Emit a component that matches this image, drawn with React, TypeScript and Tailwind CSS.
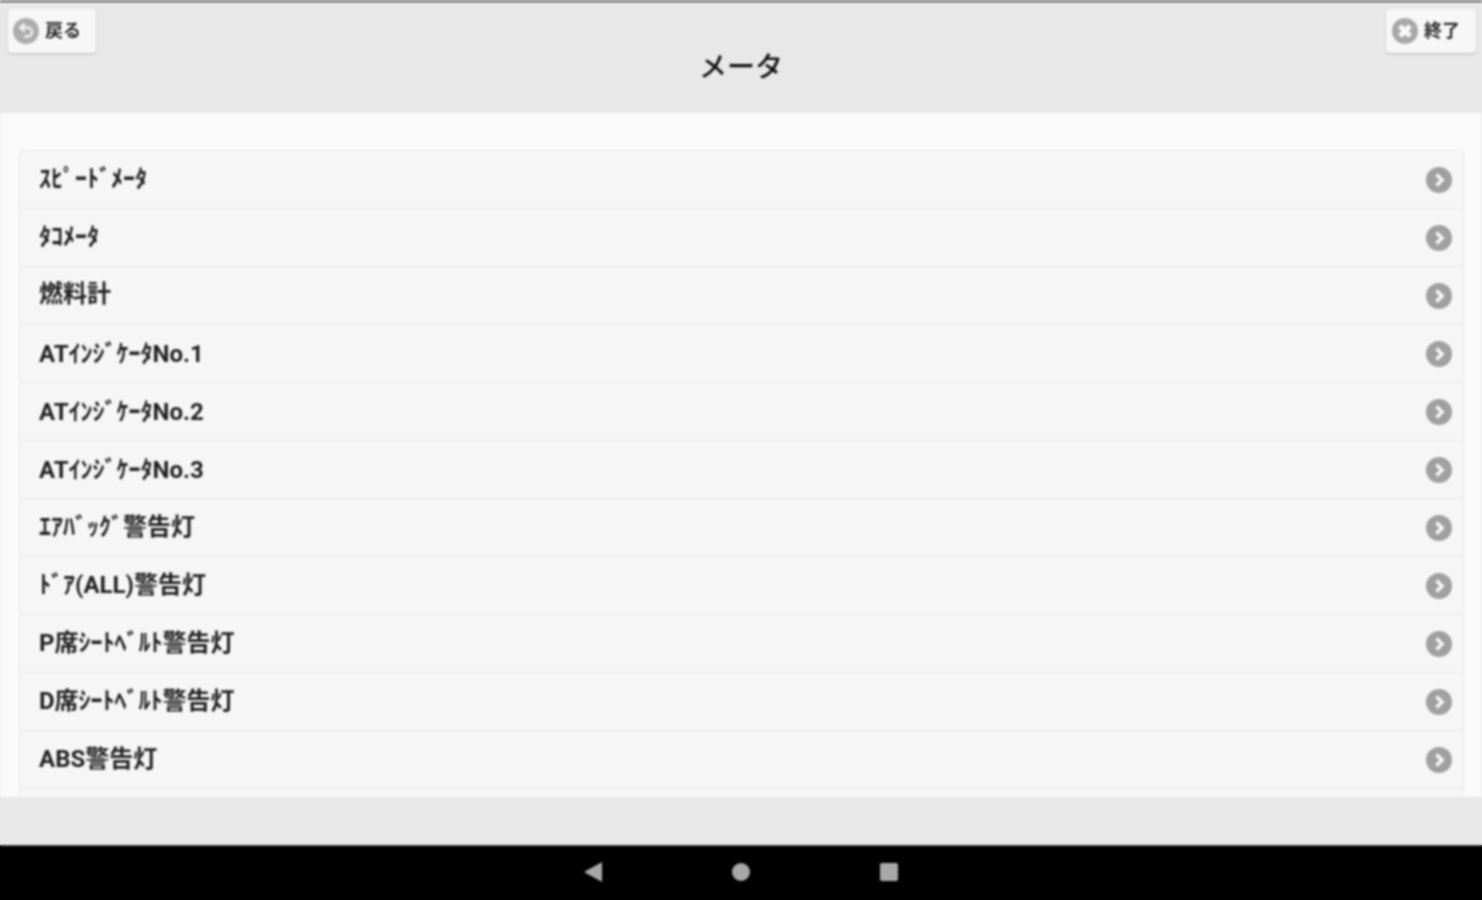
import React from "react";

const rows = [
  { t: "ｽﾋﾟｰﾄﾞﾒｰﾀ", c: "pb-[2px]" },
  { t: "ﾀｺﾒｰﾀ", c: "pb-[2px]" },
  { t: "燃料計", c: "pb-[3px]" },
  { t: "ATｲﾝｼﾞｹｰﾀNo.1", c: "pb-0" },
  { t: "ATｲﾝｼﾞｹｰﾀNo.2", c: "pb-0" },
  { t: "ATｲﾝｼﾞｹｰﾀNo.3", c: "pb-0" },
  { t: "ｴｱﾊﾞｯｸﾞ警告灯", c: "pb-[2px]" },
  { t: "ﾄﾞｱ(ALL)警告灯", c: "pb-[2px]" },
  { t: "P席ｼｰﾄﾍﾞﾙﾄ警告灯", c: "pb-[2px]" },
  { t: "D席ｼｰﾄﾍﾞﾙﾄ警告灯", c: "pb-[2px]" },
  { t: "ABS警告灯", c: "pb-[2px]" },
  { t: "", c: "" },
];

const font = { fontFamily: '"Noto Sans CJK JP", sans-serif' };

function Chevron() {
  return (
    <svg width="26" height="26" viewBox="0 0 26 26" className="shrink-0">
      <circle cx="13" cy="13" r="13" fill="#a0a0a0" />
      <path d="M10.5 7.5 L16 13 L10.5 18.5" fill="none" stroke="#f6f6f6" strokeWidth="3.6" />
    </svg>
  );
}

function BackIcon() {
  return (
    <svg width="26" height="26" viewBox="0 0 26 26" className="shrink-0">
      <circle cx="13" cy="13" r="13" fill="#adadad" />
      <path d="M8.5 9.5 H14.5 A4.5 4.5 0 0 1 14.5 18.5 H11" fill="none" stroke="#f2f2f2" strokeWidth="2.4" />
      <path d="M11.5 5.5 L7.5 9.5 L11.5 13.5" fill="none" stroke="#f2f2f2" strokeWidth="2.4" />
    </svg>
  );
}

function CloseIcon() {
  return (
    <svg width="26" height="26" viewBox="0 0 26 26" className="shrink-0">
      <circle cx="13" cy="13" r="13" fill="#a8a8a8" />
      <path d="M8 8 L18 18 M18 8 L8 18" fill="none" stroke="#fbfbfb" strokeWidth="5" />
    </svg>
  );
}

export default function App() {
  return (
    <div className="w-[1482px] h-[900px] overflow-hidden bg-[linear-gradient(#e8e8e8_845px,#000_845px)]">
      <div className="w-full h-full flex flex-col overflow-hidden bg-[#fafafa] blur-[0.8px] font-['Roboto','Noto_Sans_CJK_JP',sans-serif]">
        <div className="h-[113px] shrink-0 bg-[#e8e8e8] border-t-[3px] border-[#8c8c8c] px-[6px] pt-[5px] flex items-start justify-between relative">
          <div className="absolute left-0 right-0 top-0 h-[2px] bg-[#f4f4f4]" />
          <button className="mt-[1px] ml-[2px] w-[88px] h-[44px] rounded-[4px] bg-[#f7f7f7] shadow-[0_1px_2px_rgba(0,0,0,0.22)] flex items-center gap-[6px] pl-[5px] pb-[3px] text-[#2a2a2a] text-[18px] font-bold">
            <span className="mt-[3px] flex"><BackIcon /></span>
            <span style={font}>戻る</span>
          </button>
          <h1 className="absolute left-0 right-0 top-[44px] text-center text-[28px] leading-[36px] font-medium text-[#111]" style={font}>
            メータ
          </h1>
          <button className="mt-[1px] w-[90px] h-[44px] rounded-[4px] bg-[#f7f7f7] shadow-[0_1px_2px_rgba(0,0,0,0.22)] flex items-center gap-[6px] pl-[6px] pb-[3px] text-[#2a2a2a] text-[18px] font-bold">
            <span className="mt-[3px] flex"><CloseIcon /></span>
            <span style={font}>終了</span>
          </button>
        </div>

        <div className="h-[684px] shrink-0 overflow-hidden px-[19px] pt-[37px]">
          <ul className="w-[1445px] rounded-t-[6px] border border-[#e9e9e9] bg-[#f6f6f6]">
            {rows.map((r, i) => (
              <li
                key={i}
                className="h-[58px] flex items-center justify-between pl-[19px] pr-[11px] border-b border-[#e9e9e9]"
              >
                <span className={`text-[24px] leading-[30px] font-bold text-[#222] ${r.c}`}>{r.t}</span>
                {r.t && <Chevron />}
              </li>
            ))}
          </ul>
        </div>

        <div className="h-[48px] shrink-0 bg-[#e8e8e8]" />

        <div className="h-[55px] shrink-0 bg-black border-t border-[#555] flex items-center justify-center gap-[130px] pb-[2px]">
          <svg width="18" height="20" viewBox="0 0 18 20">
            <path d="M0 10 L18 0 V20 Z" fill="#a8a8a8" />
          </svg>
          <div className="w-[18px] h-[18px] rounded-full bg-[#a8a8a8]" />
          <div className="w-[18px] h-[18px] rounded-[2px] bg-[#a8a8a8]" />
        </div>
      </div>
    </div>
  );
}
